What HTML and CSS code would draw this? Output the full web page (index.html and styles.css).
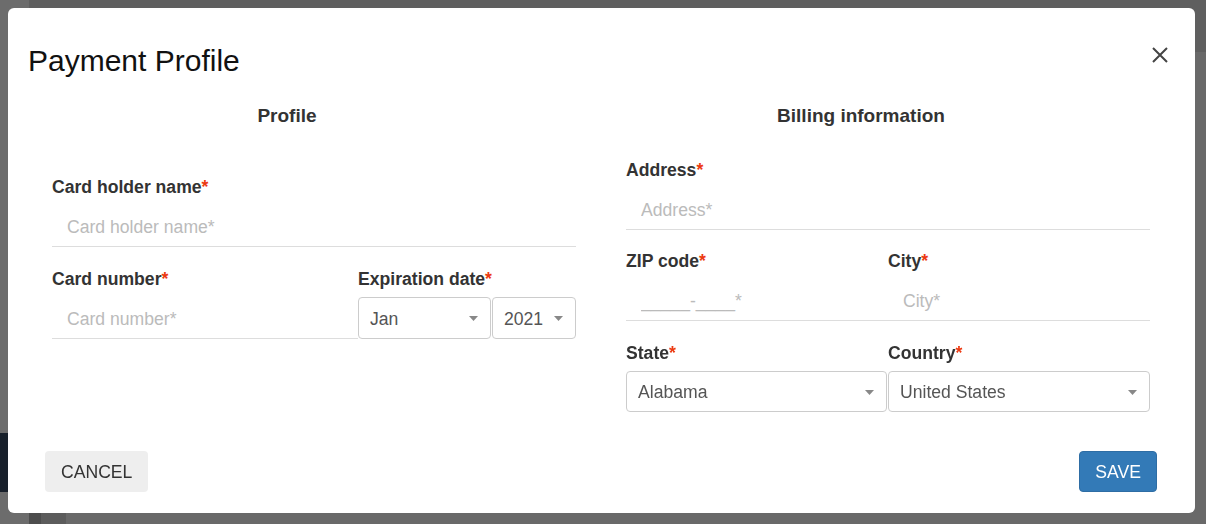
FILE: index.html
```html
<!DOCTYPE html>
<html lang="en">
<head>
    <meta charset="UTF-8">
    <meta name="viewport" content="width=device-width, initial-scale=1.0">
    <title>Payment Profile</title>
    <link rel="stylesheet" href="styles.css">
</head>
<body>
    <!-- App behind the dialog -->
    <div class="app">
        <div class="rail"><div class="rail-item"></div></div>
        <div class="shell">
            <div class="topbar"></div>
            <div class="shell-body">
                <div class="gutter"></div>
                <div class="panel"></div>
                <div class="content"></div>
            </div>
        </div>
    </div>
    <div class="backdrop"></div>

    <!-- Dialog -->
    <div class="modal">
        <div class="modal-header">
            <h1 class="modal-title">Payment Profile</h1>
            <button class="close" aria-label="Close">
                <svg viewBox="0 0 16 16" width="16" height="16"><path d="M1 1 L15 15 M15 1 L1 15" stroke="#444" stroke-width="2" fill="none"/></svg>
            </button>
        </div>

        <div class="modal-body">
            <section>
                <h2 class="section-title">Profile</h2>
                <div class="fields fields-profile">
                    <div class="group">
                        <label for="holder">Card holder name<span class="req">*</span></label>
                        <input class="input" id="holder" type="text" placeholder="Card holder name*">
                    </div>
                    <div class="row">
                        <div class="group card-number">
                            <label for="cardNumber">Card number<span class="req">*</span></label>
                            <input class="input" id="cardNumber" type="text" placeholder="Card number*">
                        </div>
                        <div class="group expiry">
                            <label for="expMonth">Expiration date<span class="req">*</span></label>
                            <div class="select-pair">
                                <div class="select select-month">
                                    <select id="expMonth"><option>Jan</option></select>
                                    <svg viewBox="0 0 9 5"><path d="M0 0 H9 L4.5 5 Z" fill="#888"/></svg>
                                </div>
                                <div class="select select-year">
                                    <select id="expYear"><option>2021</option></select>
                                    <svg viewBox="0 0 9 5"><path d="M0 0 H9 L4.5 5 Z" fill="#888"/></svg>
                                </div>
                            </div>
                        </div>
                    </div>
                </div>
            </section>

            <section>
                <h2 class="section-title">Billing information</h2>
                <div class="fields">
                    <div class="group group-tight">
                        <label for="address">Address<span class="req">*</span></label>
                        <input class="input" id="address" type="text" placeholder="Address*">
                    </div>
                    <div class="row-half">
                        <div class="group">
                            <label for="zip">ZIP code<span class="req">*</span></label>
                            <input class="input" id="zip" type="text" placeholder="_____-____*">
                        </div>
                        <div class="group">
                            <label for="city">City<span class="req">*</span></label>
                            <input class="input" id="city" type="text" placeholder="City*">
                        </div>
                    </div>
                    <div class="row-half">
                        <div class="group last">
                            <label for="state">State<span class="req">*</span></label>
                            <div class="select select-state">
                                <select id="state"><option>Alabama</option></select>
                                <svg viewBox="0 0 9 5"><path d="M0 0 H9 L4.5 5 Z" fill="#888"/></svg>
                            </div>
                        </div>
                        <div class="group last">
                            <label for="country">Country<span class="req">*</span></label>
                            <div class="select">
                                <select id="country"><option>United States</option></select>
                                <svg viewBox="0 0 9 5"><path d="M0 0 H9 L4.5 5 Z" fill="#888"/></svg>
                            </div>
                        </div>
                    </div>
                </div>
            </section>
        </div>

        <div class="modal-footer">
            <button class="btn btn-default">Cancel</button>
            <button class="btn btn-primary">Save</button>
        </div>
    </div>
</body>
</html>
```
FILE: styles.css
```css
/* Base */
* {
    box-sizing: border-box;
}
html,
body {
    margin: 0;
    height: 100%;
}
body {
    font-family: "Liberation Sans", Arial, sans-serif;
    color: #333333;
    overflow: hidden;
}

/* App behind the dialog */
.app {
    display: flex;
    height: 100vh;
    background-color: #cccccc;
}
.rail {
    width: 29px;
    padding-top: 433px;
    background-color: #d8d8d8;
}
.rail-item {
    height: 59px;
    background-color: #304056;
}
.shell {
    flex: 1;
    display: flex;
    flex-direction: column;
}
.topbar {
    height: 52px;
    background-color: #bebebe;
}
.shell-body {
    flex: 1;
    display: flex;
}
.gutter {
    width: 12px;
    background-color: #9a9a9a;
}
.panel {
    width: 25px;
    background-color: #b8b8b8;
}
.content {
    flex: 1;
    background-color: #d2d2d2;
}
.backdrop {
    position: fixed;
    inset: 0;
    background-color: rgba(0, 0, 0, 0.5);
}

/* Dialog */
.modal {
    position: fixed;
    top: 8px;
    left: 8px;
    width: 1187px;
    height: 505px;
    display: flex;
    flex-direction: column;
    background-color: #ffffff;
    border-radius: 6px;
}
.modal-header {
    display: flex;
    justify-content: space-between;
    align-items: flex-start;
    padding: 35px 27px 0 20px;
}
.modal-title {
    margin: 0;
    font-size: 30px;
    font-weight: normal;
    line-height: 36px;
    color: #111111;
}
.close {
    margin-top: 4px;
    padding: 0;
    width: 16px;
    height: 16px;
    border: none;
    background: none;
    cursor: pointer;
}
.close svg {
    display: block;
}

/* Body columns */
.modal-body {
    display: grid;
    grid-template-columns: 524px 524px;
    column-gap: 50px;
    padding: 26px 45px 0 44px;
}
.section-title {
    margin: 0 54px 0 0;
    font-size: 19px;
    line-height: 22px;
    font-weight: bold;
    text-align: center;
    color: #333333;
}
.fields {
    padding-top: 32px;
}
.fields-profile {
    padding-top: 49px;
}

/* Fields */
.group {
    margin-bottom: 21px;
}
.group-tight {
    margin-bottom: 20px;
}
.group.last {
    margin-bottom: 0;
}
.group label {
    display: block;
    margin: 1px 0 8px;
    font-size: 17.6px;
    line-height: 20px;
    font-weight: bold;
}
.req {
    color: #ec3a12;
}
.input {
    display: block;
    width: 100%;
    height: 42px;
    padding: 3px 15px 0;
    border: none;
    border-bottom: 1px solid #dddddd;
    font-family: inherit;
    font-size: 17.6px;
    color: #333333;
    outline: none;
}
.input::placeholder {
    color: #bbbbbb;
}
.row {
    display: flex;
}
.card-number {
    flex: 0 0 306px;
}
.expiry {
    flex: 1;
}
.row-half {
    display: grid;
    grid-template-columns: 1fr 1fr;
}

/* Selects */
.select-pair {
    display: flex;
    gap: 1px;
}
.select {
    position: relative;
}
.select-month {
    width: 133px;
}
.select-year {
    flex: 1;
}
.select-state {
    margin-right: 1px;
}
.select select {
    display: block;
    width: 100%;
    height: 42px;
    padding: 1px 11px 0;
    border: 1px solid #cccccc;
    border-radius: 4px;
    background-color: #ffffff;
    font-family: inherit;
    font-size: 17.6px;
    color: #555555;
    appearance: none;
    -webkit-appearance: none;
}
.select-state select,
.row-half .select select {
    height: 41px;
}
.select svg {
    position: absolute;
    right: 13px;
    top: 50%;
    width: 9px;
    height: 5px;
    margin-top: -2px;
    pointer-events: none;
}

/* Footer */
.modal-footer {
    display: flex;
    justify-content: space-between;
    margin-top: auto;
    padding: 0 38px 21px 37px;
}
.btn {
    height: 41px;
    padding: 1px 15px 0;
    border: 1px solid transparent;
    border-radius: 4px;
    font-family: inherit;
    font-size: 17.6px;
    text-transform: uppercase;
    cursor: pointer;
}
.btn-default {
    background-color: #eeeeee;
    color: #333333;
}
.btn-primary {
    background-color: #337ab7;
    border-color: #2e6da4;
    color: #ffffff;
}
```
